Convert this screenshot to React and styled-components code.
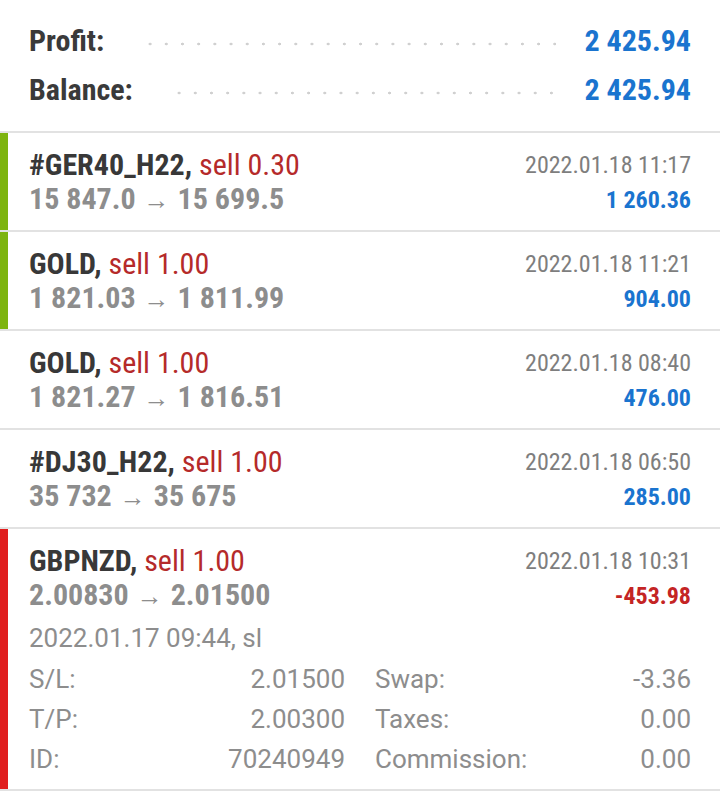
import React from 'react';
import styled, { createGlobalStyle } from 'styled-components';

const GlobalStyle = createGlobalStyle`
  body {
    margin: 0;
    background: #fff;
    font-family: Roboto, "Liberation Sans", sans-serif;
  }
`;

const condensed = `"Roboto Condensed", "Liberation Sans Narrow", Roboto, sans-serif`;

const Page = styled.div`
  width: 720px;
  background: #fff;
`;

const Summary = styled.div`
  padding: 16px 29px 17px;
  border-bottom: 2px solid #e2e2e2;
`;

const SummaryRow = styled.div`
  display: flex;
  align-items: center;
  height: 49px;
  font-family: ${condensed};
  font-weight: 700;
  font-size: 30px;
`;

const SummaryLabel = styled.span`
  color: #3a3a3a;
  margin-right: 38px;
`;

const Dots = styled.span`
  flex: 1;
  height: 4px;
  margin-top: 6px;
  background-image: radial-gradient(circle, #d0d0d0 1.3px, transparent 1.6px);
  background-size: 16.2px 4px;
  background-repeat: repeat-x;
  background-position: left center;
`;

const SummaryValue = styled.span`
  color: #1a74cf;
  margin-left: 28px;
`;

const Trade = styled.div`
  display: flex;
  border-bottom: 2px solid #e2e2e2;
`;

const Bar = styled.div`
  width: 8px;
  flex: none;
  background: ${(p) => p.$color || 'transparent'};
`;

const Body = styled.div`
  flex: 1;
  padding: 15px 29px ${(p) => (p.$open ? '10px' : '13px')} 21px;
`;

const Head = styled.div`
  display: flex;
  justify-content: space-between;
`;

const Left = styled.div`
  font-family: ${condensed};
`;

const Right = styled.div`
  font-family: ${condensed};
  text-align: right;
`;

const Title = styled.div`
  font-size: 30px;
  line-height: 34px;
  font-weight: 700;
  color: #383838;
`;

const Side = styled.span`
  font-weight: 400;
  color: ${(p) => (p.$buy ? '#1a74cf' : '#b52a2a')};
`;

const Prices = styled.div`
  font-size: 30px;
  line-height: 34px;
  font-weight: 700;
  color: #8d8d8d;
`;

const Arrow = styled.span`
  font-weight: 400;
  font-size: 26px;
  margin: 0 8px;
  color: #8d8d8d;
`;

const Time = styled.div`
  font-size: 24px;
  line-height: 34px;
  color: #7e7e7e;
`;

const Profit = styled.div`
  font-size: 24px;
  line-height: 32px;
  margin-top: 2px;
  font-weight: 700;
  color: ${(p) => (p.$loss ? '#c42424' : '#1a74cf')};
`;

const Details = styled.div`
  margin-top: 5px;
  font-size: 26px;
  color: #8d8d8d;
`;

const OpenLine = styled.div`
  line-height: 40px;
`;

const Grid = styled.div`
  display: grid;
  grid-template-columns: 1fr 1fr;
  column-gap: 30px;
  margin-top: 1px;
`;

const Field = styled.div`
  display: flex;
  justify-content: space-between;
  line-height: 40px;
`;

const trades = [
  { symbol: '#GER40_H22', side: 'sell', vol: '0.30', from: '15 847.0', to: '15 699.5', time: '2022.01.18 11:17', profit: '1 260.36', bar: '#7db40f' },
  { symbol: 'GOLD', side: 'sell', vol: '1.00', from: '1 821.03', to: '1 811.99', time: '2022.01.18 11:21', profit: '904.00', bar: '#7db40f' },
  { symbol: 'GOLD', side: 'sell', vol: '1.00', from: '1 821.27', to: '1 816.51', time: '2022.01.18 08:40', profit: '476.00' },
  { symbol: '#DJ30_H22', side: 'sell', vol: '1.00', from: '35 732', to: '35 675', time: '2022.01.18 06:50', profit: '285.00' },
  {
    symbol: 'GBPNZD', side: 'sell', vol: '1.00', from: '2.00830', to: '2.01500', time: '2022.01.18 10:31', profit: '-453.98', loss: true, bar: '#e01e1e',
    details: {
      open: '2022.01.17 09:44, sl',
      fields: [
        ['S/L:', '2.01500'], ['Swap:', '-3.36'],
        ['T/P:', '2.00300'], ['Taxes:', '0.00'],
        ['ID:', '70240949'], ['Commission:', '0.00'],
      ],
    },
  },
];

const App = () => {
  return (
    <Page>
      <GlobalStyle />
      <Summary>
        <SummaryRow>
          <SummaryLabel>Profit:</SummaryLabel>
          <Dots />
          <SummaryValue>2 425.94</SummaryValue>
        </SummaryRow>
        <SummaryRow>
          <SummaryLabel>Balance:</SummaryLabel>
          <Dots />
          <SummaryValue>2 425.94</SummaryValue>
        </SummaryRow>
      </Summary>
      {trades.map((t, i) => (
        <Trade key={i}>
          <Bar $color={t.bar} />
          <Body $open={!!t.details}>
            <Head>
              <Left>
                <Title>
                  {t.symbol}, <Side>{t.side} {t.vol}</Side>
                </Title>
                <Prices>
                  {t.from}<Arrow>→</Arrow>{t.to}
                </Prices>
              </Left>
              <Right>
                <Time>{t.time}</Time>
                <Profit $loss={t.loss}>{t.profit}</Profit>
              </Right>
            </Head>
            {t.details && (
              <Details>
                <OpenLine>{t.details.open}</OpenLine>
                <Grid>
                  {t.details.fields.map(([k, v]) => (
                    <Field key={k}>
                      <span>{k}</span>
                      <span>{v}</span>
                    </Field>
                  ))}
                </Grid>
              </Details>
            )}
          </Body>
        </Trade>
      ))}
    </Page>
  );
};

export default App;
